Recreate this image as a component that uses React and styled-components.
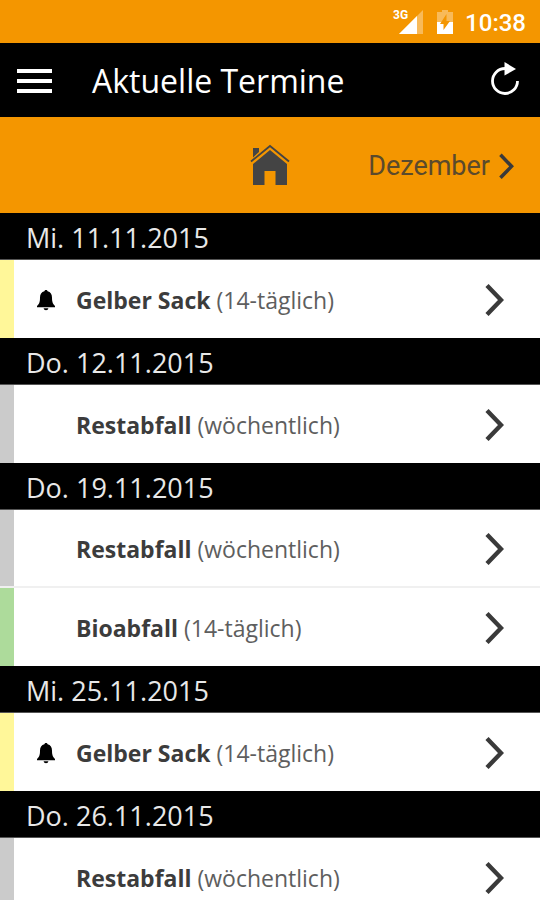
import React from 'react';
import styled, { createGlobalStyle } from 'styled-components';

const days = [
    {
        date: 'Mi. 11.11.2015',
        items: [{ name: 'Gelber Sack', interval: '14-täglich', color: '#fff799', alarm: true }],
    },
    {
        date: 'Do. 12.11.2015',
        items: [{ name: 'Restabfall', interval: 'wöchentlich', color: '#cbcbcb' }],
    },
    {
        date: 'Do. 19.11.2015',
        items: [
            { name: 'Restabfall', interval: 'wöchentlich', color: '#cbcbcb' },
            { name: 'Bioabfall', interval: '14-täglich', color: '#addb9b' },
        ],
    },
    {
        date: 'Mi. 25.11.2015',
        items: [{ name: 'Gelber Sack', interval: '14-täglich', color: '#fff799', alarm: true }],
    },
    {
        date: 'Do. 26.11.2015',
        items: [{ name: 'Restabfall', interval: 'wöchentlich', color: '#cbcbcb' }],
    },
];

function SignalIcon() {
    return (
        <svg width="24" height="24" viewBox="0 0 24 24" aria-hidden="true">
            <path d="M24 0V24H0Z" fill="#fff" fillOpacity="0.35" />
            <path d="M18 6V24H0Z" fill="#fff" />
        </svg>
    );
}

function BatteryIcon() {
    return (
        <svg width="16" height="24" viewBox="0 0 16 24" aria-hidden="true">
            <path d="M5 0H11V2H16V12H0V2H5Z" fill="#fff" fillOpacity="0.35" />
            <path d="M0 12H16V24H0Z" fill="#fff" />
            <path d="M9.5 4V11H13L6.5 20V14H3Z" fill="#f49600" />
        </svg>
    );
}

function ReloadIcon() {
    return (
        <svg width="30" height="34" viewBox="0 0 30 34" aria-hidden="true">
            <path d="M15 6.5A12.5 12.5 0 1 0 27.5 19" fill="none" stroke="#fff" strokeWidth="2.8" />
            <path d="M14.5 0L26 7L14.5 13.5Z" fill="#fff" />
        </svg>
    );
}

function HomeIcon() {
    return (
        <svg width="40" height="42" viewBox="0 0 40 42" aria-hidden="true">
            <path d="M3 4H9V8L3 13.5Z" fill="#444" />
            <path d="M1 17.5L20 2L39 17.5" fill="none" stroke="#444" strokeWidth="1.8" />
            <path d="M20 6L37 20V41H25.5V27H14.5V41H3V20Z" fill="#444" />
        </svg>
    );
}

function BellIcon() {
    return (
        <svg width="20" height="22" viewBox="0 0 20 22" aria-hidden="true">
            <path
                d="M10 1C11 1 11.5 1.6 11.6 2.3C14.6 3 16 5.3 16 8.5C16 13.4 17 15.2 19 17V18.3H1V17C3 15.2 4 13.4 4 8.5C4 5.3 5.4 3 8.4 2.3C8.5 1.6 9 1 10 1Z"
                fill="#000"
            />
            <path d="M7.6 19.3H12.4C12.2 20.6 11.3 21.3 10 21.3C8.7 21.3 7.8 20.6 7.6 19.3Z" fill="#000" />
        </svg>
    );
}

function Chevron({ width, height }) {
    return (
        <svg width={width} height={height} viewBox="0 0 20 34" aria-hidden="true">
            <path d="M3 3.5L17 18L3 32.5" fill="none" stroke="#3a3a3a" strokeWidth="4.4" />
        </svg>
    );
}

function App() {
    return (
        <>
            <GlobalStyle />
            <Screen>
                <StatusBar>
                    <Network>3G</Network>
                    <SignalIcon />
                    <Battery>
                        <BatteryIcon />
                    </Battery>
                    <Clock>10:38</Clock>
                </StatusBar>
                <Header>
                    <MenuButton aria-label="Menü">
                        <MenuLine />
                        <MenuLine />
                        <MenuLine />
                    </MenuButton>
                    <Title>Aktuelle Termine</Title>
                    <ReloadButton aria-label="Aktualisieren">
                        <ReloadIcon />
                    </ReloadButton>
                </Header>
                <MonthBar>
                    <HomeButton aria-label="Startseite">
                        <HomeIcon />
                    </HomeButton>
                    <NextMonth>
                        <span>Dezember</span>
                        <Chevron width={16} height={27} />
                    </NextMonth>
                </MonthBar>
                <List>
                    {days.map((day) => (
                        <section key={day.date}>
                            <DateHeading>{day.date}</DateHeading>
                            {day.items.map((item) => (
                                <Row key={item.name} href="#">
                                    <Stripe $color={item.color} />
                                    <Alarm>{item.alarm && <BellIcon />}</Alarm>
                                    <Label>
                                        <strong>{item.name}</strong> ({item.interval})
                                    </Label>
                                    <Chevron width={20} height={34} />
                                </Row>
                            ))}
                        </section>
                    ))}
                </List>
            </Screen>
        </>
    );
}

const GlobalStyle = createGlobalStyle`
    * {
        box-sizing: border-box;
    }
    body {
        margin: 0;
        background: #fff;
        font-family: 'Open Sans', 'Noto Sans', sans-serif;
    }
    button {
        padding: 0;
        border: none;
        background: none;
        cursor: pointer;
    }
    svg {
        display: block;
        flex-shrink: 0;
    }
`;

const Screen = styled.div`
    display: flex;
    flex-direction: column;
    height: 100vh;
`;

const StatusBar = styled.div`
    display: flex;
    flex-shrink: 0;
    align-items: center;
    justify-content: flex-end;
    height: 43px;
    padding-right: 14px;
    background: #f49600;
    color: #fff;
    font-family: Roboto, sans-serif;
`;

const Network = styled.span`
    align-self: flex-start;
    margin: 8px -9px 0 0;
    font-size: 12px;
    line-height: 14px;
    font-weight: 700;
`;

const Battery = styled.span`
    margin: 0 12px 0 14px;
`;

const Clock = styled.time`
    padding-top: 2px;
    font-size: 24px;
    font-weight: 500;
`;

const Header = styled.header`
    display: flex;
    flex-shrink: 0;
    align-items: center;
    height: 74px;
    padding: 0 20px 0 17px;
    background: #000;
    color: #fff;
`;

const MenuButton = styled.button`
    display: flex;
    flex-direction: column;
    gap: 6px;
    width: 35px;
    padding-top: 2px;
`;

const MenuLine = styled.span`
    height: 4px;
    background: #fff;
`;

const Title = styled.h1`
    flex: 1;
    margin: 0 0 0 40px;
    padding-top: 2px;
    font-size: 32px;
    line-height: 40px;
    font-weight: 400;
`;

const ReloadButton = styled.button`
    padding-bottom: 2px;
`;

const MonthBar = styled.nav`
    display: grid;
    grid-template-columns: 1fr auto 1fr;
    flex-shrink: 0;
    align-items: center;
    height: 96px;
    padding-right: 26px;
    padding-left: 26px;
    background: #f49600;
`;

const HomeButton = styled.button`
    grid-column: 2;
`;

const NextMonth = styled.button`
    display: flex;
    align-items: center;
    justify-self: end;
    gap: 8px;
    color: #5b4a2c;
    font-family: Roboto, sans-serif;
    font-size: 27px;
    line-height: 32px;

    span {
        padding-top: 2px;
    }
`;

const List = styled.main`
    flex: 1;
    min-height: 0;
    overflow-y: auto;
    scrollbar-width: none;
`;

const DateHeading = styled.h2`
    margin: 0;
    padding: 6px 26px 3px;
    border-bottom: 1px solid #555;
    background: #000;
    color: #e8e8e8;
    font-size: 27px;
    line-height: 37px;
    font-weight: 400;
`;

const Row = styled.a`
    display: flex;
    align-items: center;
    height: 78px;
    padding-right: 36px;
    background: #fff;
    color: #5e5e5e;
    text-decoration: none;

    &:not(:last-child) {
        border-bottom: 2px solid #f0f0f0;
    }
`;

const Stripe = styled.span`
    align-self: stretch;
    width: 14px;
    background: ${(props) => props.$color};
`;

const Alarm = styled.span`
    width: 62px;
    padding: 2px 0 0 22px;
`;

const Label = styled.span`
    flex: 1;
    padding-top: 2px;
    font-size: 23px;
    line-height: 32px;

    strong {
        color: #3c3c3c;
        font-weight: 700;
    }
`;

export default App;
